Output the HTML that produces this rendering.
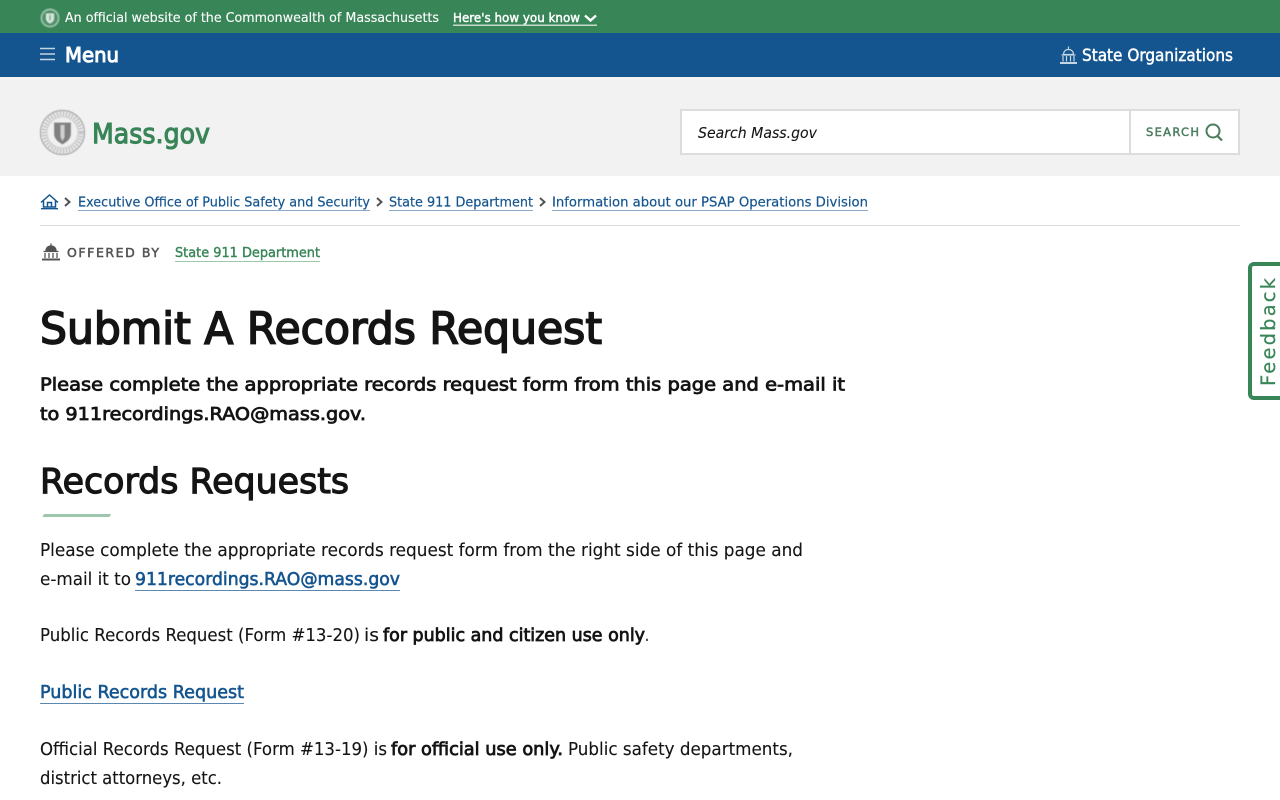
<!DOCTYPE html>
<html lang="en"><head><meta charset="utf-8"><title>Submit A Records Request | Mass.gov</title>
<style>
html,body{margin:0;padding:0;width:1280px;height:800px;overflow:hidden;background:#fff}
svg{display:block}
text{font-family:"DejaVu Sans","Liberation Sans",sans-serif;white-space:pre}
.r{fill:#141414;stroke:#141414;stroke-width:.12;font-size:18px}
.b{fill:#141414;stroke:#141414;stroke-width:.8;font-size:18px}
.l{fill:#14558f;stroke:#14558f;stroke-width:.6;font-size:18px}
.c{fill:#14558f;stroke:#14558f;stroke-width:.2;font-size:13.5px}
</style></head><body>
<svg width="1280" height="800" viewBox="0 0 1280 800" xmlns="http://www.w3.org/2000/svg">
<defs><filter id="s"><feGaussianBlur stdDeviation=".5"/></filter></defs>
<rect width="1280" height="33" fill="#388557"/>
<rect y="33" width="1280" height="44" fill="#14558f"/>
<rect y="77" width="1280" height="99" fill="#f2f2f2"/>

<!-- top bar -->
<g filter="url(#s)">
<circle cx="50" cy="18" r="9.500" fill="#9cc3ab"/><circle cx="50" cy="18" r="7.800" fill="#4f9169"/>
<path d="M46 13.500h8v5c0 2.500-2 4-4 5-2-1-4-2.500-4-5z" fill="#d6e6dc"/><rect x="49.300" y="15" width="1.400" height="5.500" fill="#6fa687"/>
</g>
<text x="65" y="22" font-size="13.500" fill="#fff" stroke="#fff" stroke-width=".12" textLength="374" lengthAdjust="spacingAndGlyphs">An official website of the Commonwealth of Massachusetts</text>
<text x="453" y="22" font-size="12.500" fill="#fff" stroke="#fff" stroke-width=".45" textLength="127" lengthAdjust="spacingAndGlyphs">Here's how you know</text>
<path d="M585 15.500l5.500 5 5.500-5" fill="none" stroke="#fff" stroke-width="2.400"/>
<rect x="453" y="24.500" width="144" height="1.500" fill="#c3dacb"/>

<!-- nav -->
<path d="M40 48.500h15M40 54h15M40 59.500h15" stroke="#c4d5e3" stroke-width="1.500"/>
<text x="65" y="62" font-size="20" fill="#fff" stroke="#fff" stroke-width="1" textLength="54" lengthAdjust="spacingAndGlyphs">Menu</text>
<g fill="none" stroke="#c4d5e3" stroke-width="1.200">
<path d="M1068.500 46.500v3M1063.500 54.500c0-3 2-5 5-5s5 2 5 5z"/>
<path d="M1061.500 55h14M1063 56v5.500M1066.500 56v5.500M1070.500 56v5.500M1074 56v5.500"/>
<path d="M1060 63h17" stroke-width="2"/>
</g>
<text x="1082" y="61" font-size="16.500" fill="#fff" stroke="#fff" stroke-width=".45" textLength="151" lengthAdjust="spacingAndGlyphs">State Organizations</text>

<!-- header -->
<g filter="url(#s)">
<circle cx="62.500" cy="132.500" r="22" fill="#f8f8f8" stroke="#a5a5a5" stroke-width="1.200"/>
<circle cx="62.500" cy="132.500" r="18.500" fill="none" stroke="#c6c6c6" stroke-width="5" stroke-dasharray="2 1"/>
<circle cx="62.500" cy="132.500" r="15.500" fill="#f0f0f0" stroke="#c4c4c4" stroke-width=".8"/>
<path d="M54 122.500h17v11c0 5.500-4 8.500-8.500 11-4.500-2.500-8.500-5.500-8.500-11z" fill="#808080"/>
<path d="M60.500 125h4v12l-2 4-2-4z" fill="#cfcfcf"/>
</g>
<text x="92" y="143" font-size="28" fill="#388557" stroke="#388557" stroke-width="1.100" textLength="118" lengthAdjust="spacingAndGlyphs">Mass.gov</text>

<rect x="681" y="110" width="558" height="44" fill="#fff" stroke="#dcdcdc" stroke-width="2"/>
<rect x="1129" y="110" width="2" height="44" fill="#dcdcdc"/>
<text x="698" y="138" font-size="15.500" font-style="italic" fill="#141414" stroke="#141414" stroke-width=".1" textLength="119" lengthAdjust="spacingAndGlyphs">Search Mass.gov</text>
<text x="1146" y="136" font-size="11.500" fill="#4b7d5e" stroke="#4b7d5e" stroke-width=".45" textLength="53" lengthAdjust="spacing">SEARCH</text>
<circle cx="1213" cy="131" r="6.500" fill="none" stroke="#4b7d5e" stroke-width="2"/>
<path d="M1217.500 136l4.500 4.500" stroke="#4b7d5e" stroke-width="2.200"/>

<!-- breadcrumb -->
<g fill="none" stroke="#14558f" stroke-width="1.500">
<path d="M41 202.500l8.500-7.500 8.500 7.500M43.500 200.500v6.500h12v-6.500M47.500 207v-4.500h4v4.500"/>
<path d="M41 208.700h17" stroke-width="1.300"/>
</g>
<g fill="none" stroke="#535353" stroke-width="2">
<path d="M65 198l4.500 4-4.500 4M377 198l4.500 4-4.500 4M540 198l4.500 4-4.500 4"/>
</g>
<text class="c" x="78" y="206.500" textLength="292" lengthAdjust="spacingAndGlyphs">Executive Office of Public Safety and Security</text>
<rect x="78" y="210" width="292" height="1" fill="#8aaac7"/>
<text class="c" x="389" y="206.500" textLength="144" lengthAdjust="spacingAndGlyphs">State 911 Department</text>
<rect x="389" y="210" width="144" height="1" fill="#8aaac7"/>
<text class="c" x="552" y="206.500" textLength="316" lengthAdjust="spacingAndGlyphs">Information about our PSAP Operations Division</text>
<rect x="552" y="210" width="316" height="1" fill="#8aaac7"/>
<rect x="40" y="225" width="1200" height="1" fill="#dcdcdc"/>

<!-- offered by -->
<g fill="none" stroke="#535353" stroke-width="1.300">
<path d="M51 243.500v3M46 251c0-3 2-5 5-5s5 2 5 5z" fill="#535353"/>
<path d="M43.500 251.500h15M45 253v5M49 253v5M53 253v5M57 253v5"/>
<path d="M42 259.500h18" stroke-width="2"/>
</g>
<text x="67" y="257" font-size="12.500" fill="#535353" stroke="#535353" stroke-width=".5" textLength="92" lengthAdjust="spacing">OFFERED BY</text>
<text x="175" y="257" font-size="13.500" fill="#388557" stroke="#388557" stroke-width=".4" textLength="145" lengthAdjust="spacingAndGlyphs">State 911 Department</text>
<rect x="175" y="261" width="145" height="1" fill="#9dc6ad"/>

<!-- feedback -->
<path d="M1280 264h-26a4 4 0 0 0-4 4v126a4 4 0 0 0 4 4h26" fill="#fff" stroke="#388557" stroke-width="4"/>
<text transform="translate(1275 386) rotate(-90)" font-size="19.500" fill="#388557" stroke="#388557" stroke-width=".2" textLength="108" lengthAdjust="spacing">Feedback</text>

<!-- main -->
<text x="40" y="343.500" font-size="44" fill="#141414" stroke="#141414" stroke-width="1.700" textLength="562" lengthAdjust="spacingAndGlyphs">Submit A Records Request</text>
<text class="b" x="40" y="390.500" font-size="19" textLength="805" lengthAdjust="spacingAndGlyphs">Please complete the appropriate records request form from this page and e-mail it</text>
<text class="b" x="40" y="420" font-size="19" textLength="326" lengthAdjust="spacingAndGlyphs">to 911recordings.RAO@mass.gov.</text>
<text x="40" y="493" font-size="35" fill="#141414" stroke="#141414" stroke-width="1.200" textLength="309" lengthAdjust="spacingAndGlyphs">Records Requests</text>
<path d="M44 514h67l-1.500 3h-67z" fill="#9dc6ad"/>

<text class="r" x="40" y="556" textLength="763" lengthAdjust="spacingAndGlyphs">Please complete the appropriate records request form from the right side of this page and</text>
<text class="r" x="40" y="585" textLength="91" lengthAdjust="spacingAndGlyphs">e-mail it to</text>
<text class="l" x="135" y="585" textLength="265" lengthAdjust="spacingAndGlyphs">911recordings.RAO@mass.gov</text>
<rect x="135" y="590" width="265" height="1" fill="#5b88b0"/>

<text class="r" x="40" y="641" textLength="320" lengthAdjust="spacingAndGlyphs">Public Records Request (Form #13-20)</text>
<text class="r" x="364" y="641" textLength="15" lengthAdjust="spacingAndGlyphs">is</text>
<text class="b" x="383" y="641" textLength="262" lengthAdjust="spacingAndGlyphs">for public and citizen use only</text>
<text class="r" x="645" y="641" textLength="4" lengthAdjust="spacingAndGlyphs">.</text>

<text class="l" x="40" y="698" textLength="204" lengthAdjust="spacingAndGlyphs">Public Records Request</text>
<rect x="40" y="703" width="204" height="1" fill="#5b88b0"/>

<text class="r" x="40" y="755" textLength="347" lengthAdjust="spacingAndGlyphs">Official Records Request (Form #13-19) is</text>
<text class="b" x="391" y="755" textLength="172" lengthAdjust="spacingAndGlyphs">for official use only.</text>
<text class="r" x="568" y="755" textLength="225" lengthAdjust="spacingAndGlyphs">Public safety departments,</text>
<text class="r" x="40" y="784" textLength="182" lengthAdjust="spacingAndGlyphs">district attorneys, etc.</text>
</svg>
</body></html>
